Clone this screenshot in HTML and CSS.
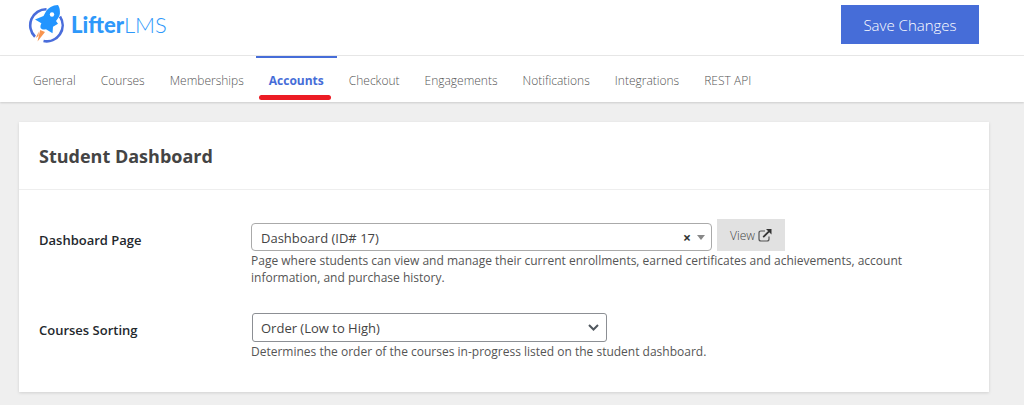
FILE: index.html
```
<!DOCTYPE html>
<html lang="en">
<head>
<meta charset="utf-8">
<title>LifterLMS Settings</title>
<link rel="stylesheet" href="styles.css">
</head>

<body>
<form class="settings">
	<header class="header">
		<a class="logo" href="#">
			<svg class="logo-mark" width="36" height="40" viewBox="28 4 36 40" aria-hidden="true">
				<path d="M46.500 9.300A16 16 0 0 0 35 36.700M60 16.500A16 16 0 0 1 43.500 41" fill="none" stroke="#4a6ddb" stroke-width="2.600"/>
				<path d="M58 5c-5.500.3-9.700 2.700-12.200 6.800l-2.300 4.200-8.500 3.500 6.400 3.700c-1 2-1.300 3.600-.6 5 1.300 1.500 3.200 1.700 5.200 1l6.500 4 .5-6.500 5-3-2-2.700c1.900-2.400 3.500-4.300 3.900-7.300.2-3.200-.2-6.200-1.900-8.700z" fill="#2295ff"/>
				<circle cx="52" cy="14.500" r="2.200" fill="#fff"/>
				<path d="M40.200 30l4.800 2-7.500 9.500z" fill="#f8954f"/>
				<path d="M38.800 31.500L38.500 36l-2.700 2z" fill="#f8954f"/>
			</svg>
			<span class="logo-text"><b>Lifter</b>LMS</span>
		</a>
		<button class="save" type="submit">Save Changes</button>
	</header>

	<nav class="tabs">
		<a class="tab" href="#">General</a>
		<a class="tab" href="#">Courses</a>
		<a class="tab" href="#">Memberships</a>
		<a class="tab active" href="#">Accounts</a>
		<a class="tab" href="#">Checkout</a>
		<a class="tab" href="#">Engagements</a>
		<a class="tab" href="#">Notifications</a>
		<a class="tab" href="#">Integrations</a>
		<a class="tab" href="#">REST API</a>
	</nav>

	<section class="card">
		<h2 class="card-title">Student Dashboard</h2>
		<div class="fields">
			<label class="label" for="dashboard-page">Dashboard Page</label>
			<div class="field">
				<div class="row">
					<div class="combo">
						<select class="combo-select" id="dashboard-page">
							<option>Dashboard (ID# 17)</option>
						</select>
						<button class="clear" type="button" aria-label="Clear">×</button>
						<svg class="arrow" width="8" height="5" viewBox="0 0 8 5" aria-hidden="true"><path d="M0 0h8L4 5z" fill="#888"/></svg>
					</div>
					<a class="view" href="#">View
						<svg width="14" height="13" viewBox="0 0 14 13" aria-hidden="true">
							<path d="M7 2H3Q1 2 1 4v6q0 2 2 2h6q2 0 2-2V7.500" fill="none" stroke="#555" stroke-width="1.200"/>
							<path d="M5.200 8.200L11 2.400" stroke="#333" stroke-width="1.800"/>
							<path d="M8 0h5.500v5.500z" fill="#333"/>
						</svg>
					</a>
				</div>
				<p class="description">Page where students can view and manage their current enrollments, earned certificates and achievements, account information, and purchase history.</p>
			</div>

			<label class="label" for="courses-sorting">Courses Sorting</label>
			<div class="field">
				<div class="sorting">
					<select class="sorting-select" id="courses-sorting">
						<option>Order (Low to High)</option>
					</select>
					<svg class="chevron" width="11" height="7" viewBox="0 0 11 7" aria-hidden="true"><path d="M1 1l4.500 4.500L10 1" fill="none" stroke="#50575e" stroke-width="2"/></svg>
				</div>
				<p class="description">Determines the order of the courses in-progress listed on the student dashboard.</p>
			</div>
		</div>
	</section>
</form>
</body>
</html>
```
FILE: styles.css
```
* {
	box-sizing: border-box;
}

body {
	margin: 0;
	background: #efefef;
	color: #444;
	font-family: "Open Sans", "Noto Sans", sans-serif;
	font-size: 12px;
}

a {
	text-decoration: none;
}

button, select {
	font-family: inherit;
}

.header {
	display: flex;
	justify-content: space-between;
	align-items: flex-start;
	height: 56px;
	padding: 4px 45px 0 28px;
	background: #fff;
	border-bottom: 1px solid #e8e8e8;
}

.logo {
	display: flex;
	align-items: center;
	gap: 7px;
	color: #2e98fa;
}

.logo-text {
	font-family: Lato, sans-serif;
	font-size: 22px;
	font-weight: 300;
}

.logo-text b {
	font-weight: 900;
}

.save {
	width: 138px;
	height: 39px;
	margin-top: 1px;
	padding: 0;
	border: none;
	background: #466dd8;
	color: #fff;
	font-size: 15px;
	font-weight: 300;
	cursor: pointer;
}

.tabs {
	display: flex;
	height: 46px;
	padding-left: 20px;
	background: #fff;
	box-shadow: 0 1px 2px rgba(0, 0, 0, 0.15);
}

.tab {
	position: relative;
	margin-right: -1px;
	padding: 0 13px;
	color: #555;
	font-weight: 300;
	line-height: 50px;
}

.active {
	color: #466dd8;
	font-weight: 700;
	box-shadow: inset 0 2px #466dd8;
}

.active::after {
	content: "";
	position: absolute;
	left: 3px;
	right: 6px;
	bottom: 2px;
	height: 5px;
	border-radius: 3px;
	background: #ec1c24;
}

.card {
	margin: 20px 35px 12px 19px;
	background: #fff;
	box-shadow: 0 1px 3px rgba(0, 0, 0, 0.13);
}

.card-title {
	margin: 0;
	padding: 2px 20px 0;
	border-bottom: 1px solid #eee;
	font-size: 18px;
	font-weight: 700;
	line-height: 65px;
}

.fields {
	display: grid;
	grid-template-columns: 212px 1fr;
	row-gap: 23px;
	padding: 29px 80px 32px 20px;
}

.label {
	padding-top: 11px;
	color: #23282d;
	font-size: 13px;
	font-weight: 600;
	line-height: 20px;
}

.row {
	display: flex;
	align-items: flex-end;
	gap: 5px;
}

.combo {
	display: flex;
	align-items: center;
	flex: 0 1 461px;
	height: 28px;
	padding-right: 6px;
	border: 1px solid #aaa;
	border-radius: 4px;
}

.combo-select {
	flex: 1;
	height: 26px;
	padding: 2px 9px 0;
	border: none;
	background: none;
	color: #444;
	font-size: 13px;
	appearance: none;
}

.clear {
	padding: 2px 6px 0;
	border: none;
	background: none;
	color: #333;
	font-size: 14px;
	font-weight: 700;
	line-height: 20px;
}

.view {
	display: flex;
	align-items: center;
	justify-content: center;
	gap: 3px;
	width: 68px;
	height: 32px;
	background: #e1e1e1;
	color: #444;
	font-weight: 300;
}

.sorting {
	display: grid;
	align-items: center;
	width: 355px;
	margin-left: 1px;
	margin-top: 4px;
}

.sorting-select, .chevron {
	grid-area: 1 / 1;
}

.sorting-select {
	height: 29px;
	padding: 0 8px;
	border: 1px solid #8c8f94;
	border-radius: 3px;
	background: #fff;
	color: #444;
	font-size: 13px;
	appearance: none;
}

.chevron {
	justify-self: end;
	margin-right: 8px;
	pointer-events: none;
}

.description {
	margin: 1px 0 0;
	color: #555;
	line-height: 17px;
}
```
